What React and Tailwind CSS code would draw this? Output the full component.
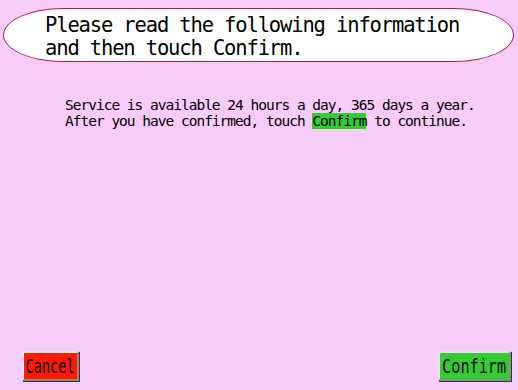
export default function App() {
  return (
    <div className="w-[518px] h-[390px] bg-[#f8ccf8] flex flex-col font-['DejaVu_Sans_Mono',monospace] text-black overflow-hidden">
      {/* Prompt bubble */}
      <div className="mt-[8px] ml-[3px] w-[511px] h-[54px] bg-white border-[1.5px] border-[#b01c4c] rounded-[60px/27px] pl-[41px] pt-[5px]">
        <p className="text-[20.5px] leading-[22.5px] tracking-[-1.15px] whitespace-nowrap">
          Please read the following information
          <br />
          and then touch Confirm.
        </p>
      </div>

      {/* Message */}
      <div className="mt-[35px] pl-[65px] text-[14.5px] leading-[16px] tracking-[-1px] whitespace-nowrap">
        <p>Service is available 24 hours a day, 365 days a year.</p>
        <p>
          After you have confirmed, touch <span className="bg-[#33cc33]">Confirm</span> to continue.
        </p>
      </div>

      <div className="flex-1" />

      {/* Buttons */}
      <div className="flex items-end justify-between pl-[22px] pr-[7px] pb-[9px]">
        <button className="w-[57px] h-[30px] bg-[#ff1a00] border-2 border-t-[#e4e4e4] border-l-[#e4e4e4] border-r-[#8a8a8a] border-b-[#8a8a8a] shadow-[1px_1px_0_#333] flex items-center justify-center whitespace-nowrap">
          <span className="inline-block text-[20px] leading-none scale-x-[0.68]">Cancel</span>
        </button>
        <button className="w-[73px] h-[30px] bg-[#33cc33] border-2 border-t-[#e4e4e4] border-l-[#e4e4e4] border-r-[#8a8a8a] border-b-[#8a8a8a] shadow-[1px_1px_0_#333] flex items-center justify-center whitespace-nowrap">
          <span className="inline-block text-[20px] leading-none scale-x-[0.76]">Confirm</span>
        </button>
      </div>
    </div>
  )
}
